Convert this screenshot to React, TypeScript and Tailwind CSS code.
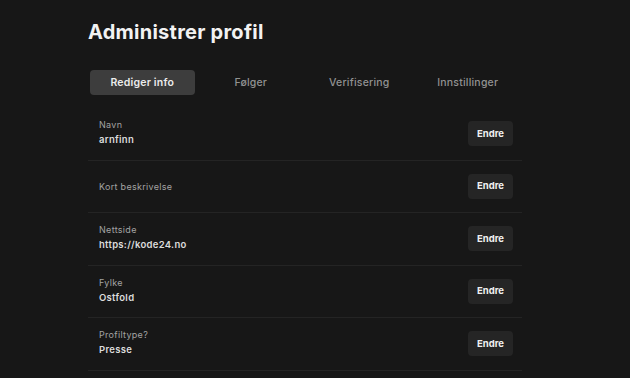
import React from 'react';

const tabs = ['Rediger info', 'Følger', 'Verifisering', 'Innstillinger'];

const fields = [
  { label: 'Navn', value: 'arnfinn' },
  { label: 'Kort beskrivelse', value: '' },
  { label: 'Nettside', value: 'https://kode24.no' },
  { label: 'Fylke', value: 'Ostfold' },
  { label: 'Profiltype?', value: 'Presse' },
];

export default function App() {
  return (
    <div
      className="min-h-[378px] w-full bg-[#171717] text-white"
      style={{ fontFamily: 'Inter, "Noto Sans", sans-serif' }}
    >
      <div className="ml-[88px] w-[434px] pt-[18px]">
        <h1 className="text-[20px] font-bold leading-[28px] tracking-[0.25px] text-[#f2f2f2]">
          Administrer profil
        </h1>

        <div className="mt-[24px] grid grid-cols-4">
          {tabs.map((tab, i) => (
            <button
              key={tab}
              className={
                i === 0
                  ? 'mx-[2px] h-[25px] rounded-[4px] bg-[#3d3d3d] text-[10.5px] font-semibold tracking-[0.2px] text-[#ececec]'
                  : 'h-[25px] text-[10.5px] font-medium tracking-[0.2px] text-[#929292]'
              }
            >
              {tab}
            </button>
          ))}
        </div>

        <div className="mt-[13px]">
          {fields.map((f) => (
            <div
              key={f.label}
              className="flex h-[52.5px] items-center justify-between border-b border-[#242424] pl-[11px] pr-[9px]"
            >
              <div className={f.value ? 'flex flex-col pb-[3px]' : 'flex flex-col pt-[1px]'}>
                <span className="text-[9px] leading-[15px] tracking-[0.3px] text-[#a3a3a3]">{f.label}</span>
                {f.value && (
                  <span className="text-[9.5px] font-semibold leading-[15px] tracking-[0.3px] text-[#dcdcdc]">
                    {f.value}
                  </span>
                )}
              </div>
              <button className="h-[25px] w-[45px] rounded-[4px] bg-[#252525] text-[9.5px] font-bold text-[#f0f0f0]">
                Endre
              </button>
            </div>
          ))}
        </div>
      </div>
    </div>
  );
}
